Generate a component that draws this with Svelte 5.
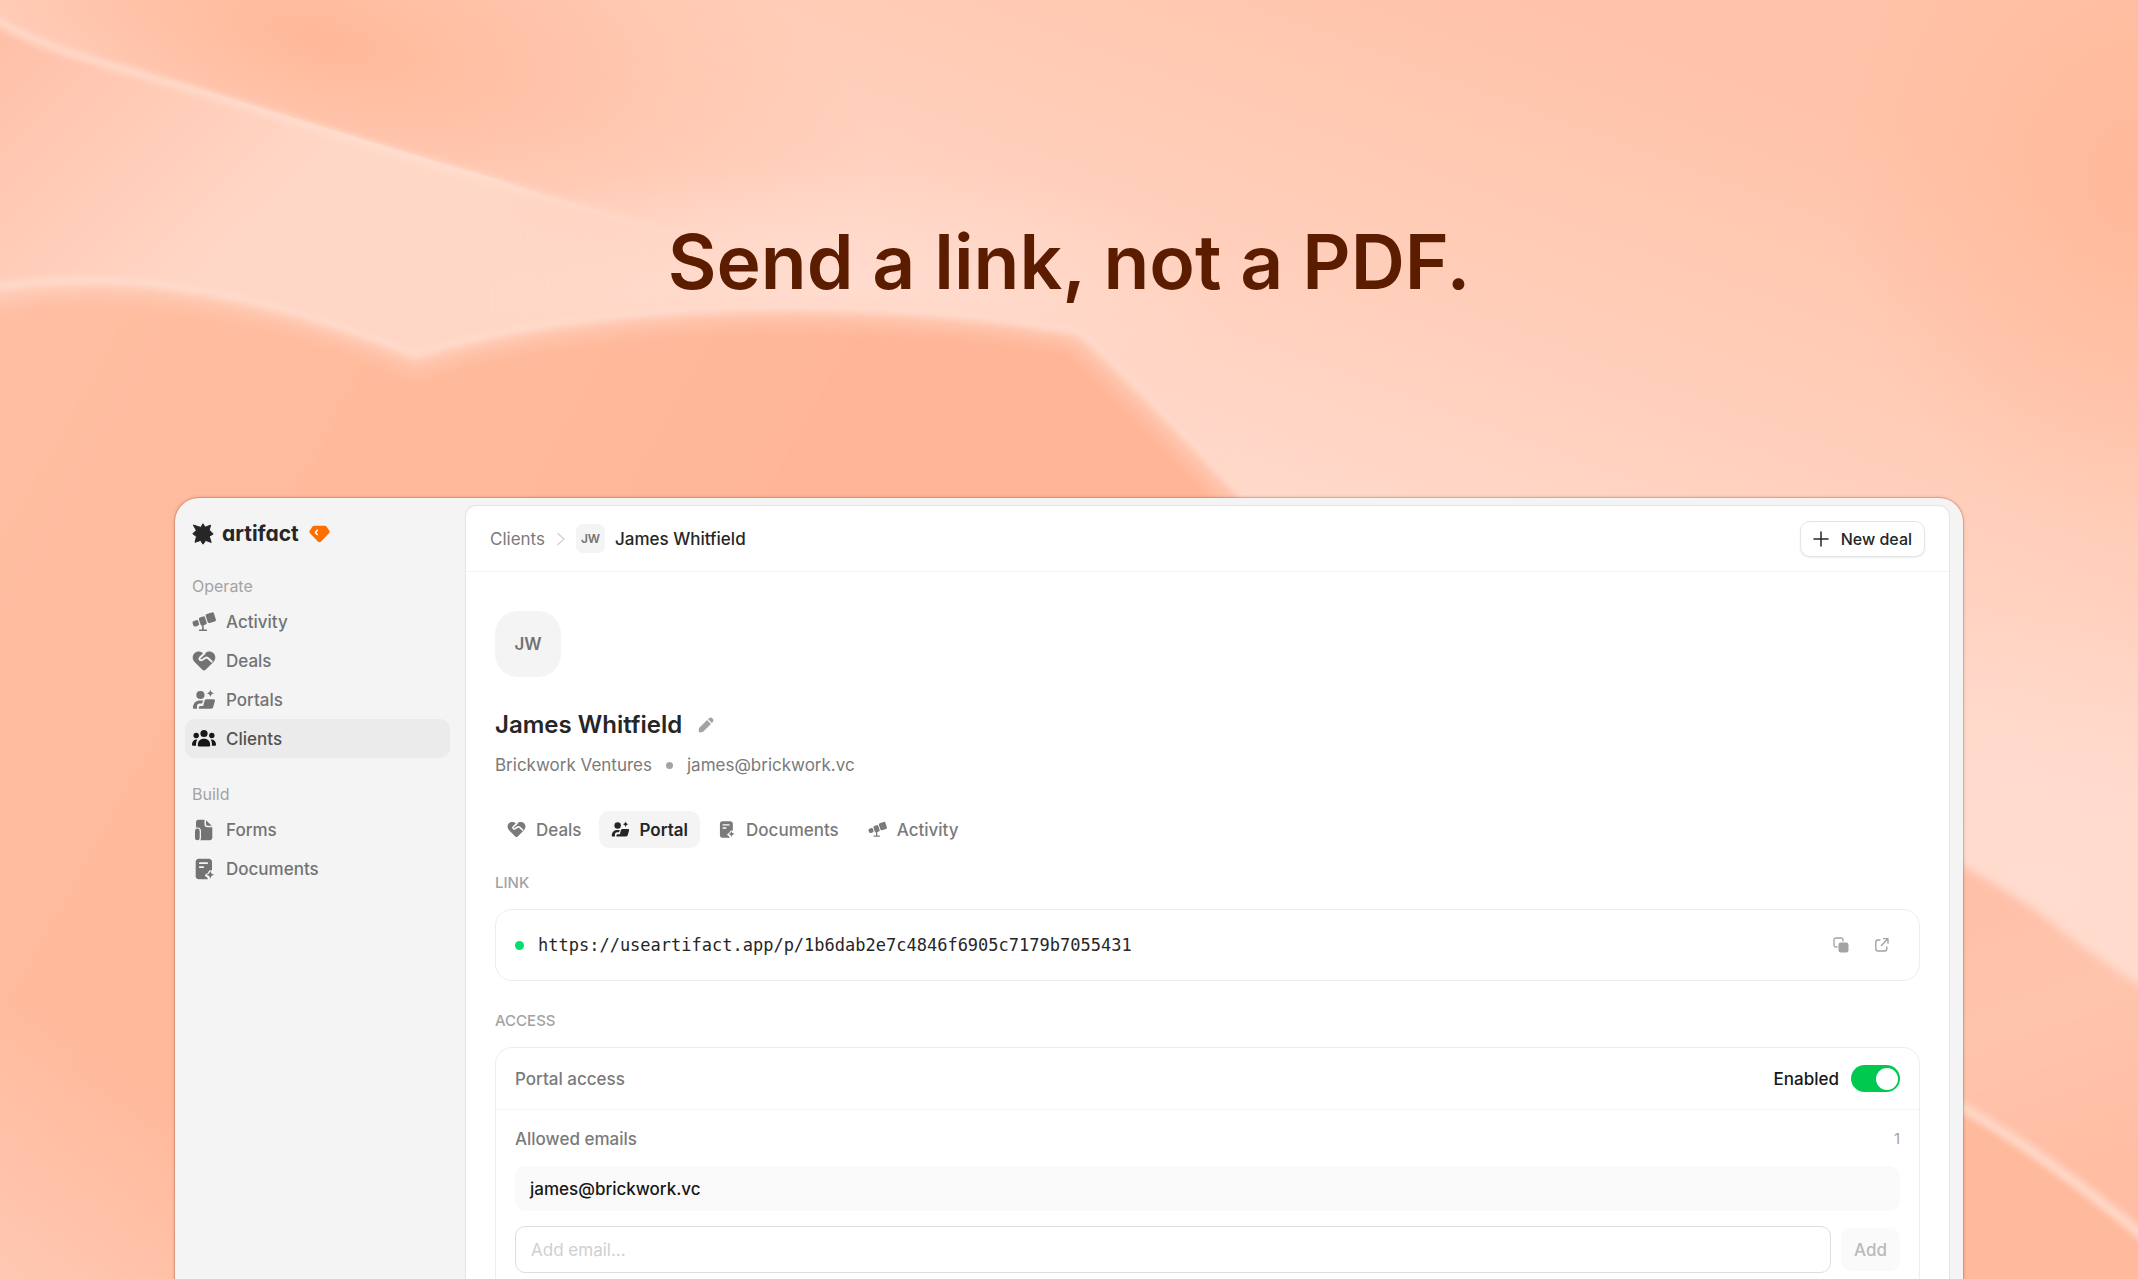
<script>
    const navGroups = [
        {
            title: "Operate",
            items: [
                { icon: "activity", label: "Activity" },
                { icon: "deals", label: "Deals" },
                { icon: "portal", label: "Portals" },
                { icon: "clients", label: "Clients", active: true },
            ],
        },
        {
            title: "Build",
            items: [
                { icon: "forms", label: "Forms" },
                { icon: "documents", label: "Documents" },
            ],
        },
    ];

    const tabs = [
        { icon: "deals", label: "Deals" },
        { icon: "portal", label: "Portal" },
        { icon: "documents", label: "Documents" },
        { icon: "activity", label: "Activity" },
    ];

    const client = {
        name: "James Whitfield",
        initials: "JW",
        company: "Brickwork Ventures",
        email: "james@brickwork.vc",
    };

    const portalUrl =
        "https://useartifact.app/p/1b6dab2e7c4846f6905c7179b7055431";

    let activeTab = $state("Portal");
    let enabled = $state(true);
    let emails = $state([client.email]);
    let newEmail = $state("");

    function addEmail(event) {
        event.preventDefault();
        if (!newEmail) return;
        emails.push(newEmail);
        newEmail = "";
    }

    function copyLink() {
        navigator.clipboard?.writeText(portalUrl);
    }
</script>

{#snippet icon(name)}
    <svg class="icon" viewBox="0 0 24 24" fill="currentColor" aria-hidden="true">
        {#if name === "activity"}
            <rect x="0.8" y="10.4" width="6" height="5.8" rx="1.8" transform="rotate(-18 3.8 13.3)" />
            <rect x="7.6" y="6.8" width="6.4" height="8.4" rx="1.5" transform="rotate(-18 10.8 11)" />
            <rect x="14.5" y="3" width="8.6" height="9.4" rx="1.8" transform="rotate(-18 18.8 7.7)" />
            <path d="M10.9 14v6M7.6 20.3h6.8" fill="none" stroke="currentColor" stroke-width="1.6" stroke-linecap="round" />
        {:else if name === "deals"}
            <path d="M12 21.4c-.6 0-1.1-.3-1.6-.7L2.6 12.900C.2 10.300.1 6.500 2.400 4.200 4.800 1.900 8.600 1.900 11 4.200l1 .9 1-.9c2.400-2.300 6.200-2.300 8.600 0 2.300 2.300 2.200 6.100-.2 8.700l-7.800 7.800c-.5.4-1 .7-1.600.7z" />
            <path class="cut" d="M12.6 4.2 7.8 8.8c-1.2 1.4.6 3.2 2.4 2.200l3.300-2.200c.8-.4 1.600-.2 2.300.3l3.900 3.500" />
        {:else if name === "portal"}
            <circle cx="8.4" cy="7" r="4.1" />
            <path d="M18.400 1.600c.4 2.300 1.400 3.300 3.600 3.700-2.200.4-3.200 1.400-3.600 3.700-.4-2.300-1.400-3.300-3.600-3.700 2.200-.4 3.200-1.400 3.600-3.700z" />
            <path d="M1.700 20.700c-.5 0-.8-.3-.8-.8.2-4.800 3.100-7.300 7.500-7.300h2.700l-1 3H7.600c-1.600 0-2.600 1.300-2.600 3v2.100z" />
            <path d="M14.400 11.300h7.100c1 0 1.700.9 1.400 1.800l-1.700 6c-.3 1-1.100 1.600-2.100 1.600H7.300c-.4 0-.6-.3-.6-.7 0-1.300.8-2.100 2-2.100h2.500l1.300-4.900c.3-1 1-1.700 1.900-1.700z" />
        {:else if name === "clients"}
            <circle cx="12" cy="6.5" r="3.6" />
            <circle cx="4.2" cy="8.5" r="2.7" />
            <circle cx="19.8" cy="8.5" r="2.7" />
            <path d="M12 11.800c3.900 0 6.200 2.500 6.200 6.200 0 1-.6 1.600-1.600 1.600H7.400c-1 0-1.600-.6-1.600-1.600 0-3.700 2.300-6.200 6.200-6.200z" />
            <path d="M5.400 12.500c-1.100 1.500-1.500 3.700-1.300 6.200H1.300c-.8 0-1.300-.5-1.300-1.300 0-3 1.900-5.200 5.400-4.900zM18.600 12.500c1.100 1.500 1.500 3.700 1.300 6.200h2.800c.8 0 1.300-.5 1.300-1.300 0-3-1.900-5.200-5.400-4.900z" />
        {:else if name === "forms"}
            <path d="M6.500 1.700h6v4.800c0 1.800 1 2.800 2.800 2.800h5v10.300c0 1.600-1 2.700-2.700 2.700H8.300c.5-.8.700-1.600.7-2.600v-6.800c0-2-1.200-3.300-3.200-3.300H4V4.300c0-1.600.9-2.600 2.500-2.600z" />
            <path d="M14 2.200l5.800 5.500h-4.200c-1 0-1.600-.6-1.600-1.600z" />
            <rect x="3" y="10.6" width="4.7" height="11.7" rx="2.3" />
        {:else if name === "documents"}
            <path fill-rule="evenodd" d="M6.800 1.700h10.100c1.800 0 3.100 1.300 3.100 3.100v8.700c-1.600-.8-3.200-.2-3.700 1.400-.3 1-.9 1.500-1.900 1.800-1.900.6-1.900 2.500-.2 3.300 1 .4 1.500.9 1.700 2.300H6.800c-1.800 0-3.100-1.300-3.100-3.100V4.800c0-1.800 1.300-3.100 3.100-3.100zm.9 3.600c-1.100 0-1.100 1.700 0 1.700h7.600c1.100 0 1.100-1.700 0-1.700zm0 4c-1.100 0-1.100 1.700 0 1.700h3.600c1.100 0 1.100-1.700 0-1.700z" />
            <path d="M18.300 13.700c.5 2.500 1.500 3.600 4 4.100-2.500.5-3.500 1.600-4 4.100-.5-2.500-1.500-3.600-4-4.100 2.500-.5 3.500-1.600 4-4.100z" />
        {/if}
    </svg>
{/snippet}

<div class="page">
    <svg class="backdrop" viewBox="0 0 2138 1279" preserveAspectRatio="none" aria-hidden="true">
        <defs>
            <linearGradient id="sky" gradientUnits="userSpaceOnUse" x1="1200" y1="480" x2="1400" y2="-60">
                <stop offset="0" stop-color="#ffd9cb" />
                <stop offset="0.5" stop-color="#ffcdb8" />
                <stop offset="1" stop-color="#ffc3a9" />
            </linearGradient>
            <linearGradient id="left-light" gradientUnits="userSpaceOnUse" x1="0" y1="40" x2="220" y2="260">
                <stop offset="0" stop-color="#ffc0a8" />
                <stop offset="1" stop-color="#ffd7c6" />
            </linearGradient>
            <linearGradient id="left-fade" gradientUnits="userSpaceOnUse" x1="480" y1="0" x2="760" y2="0">
                <stop offset="0" stop-color="#fff" />
                <stop offset="1" stop-color="#000" />
            </linearGradient>
            <linearGradient id="hill" gradientUnits="userSpaceOnUse" x1="0" y1="0" x2="900" y2="500">
                <stop offset="0" stop-color="#ffbfa5" />
                <stop offset="0.5" stop-color="#ffba9c" />
                <stop offset="1" stop-color="#ffb597" />
            </linearGradient>
            <linearGradient id="corner" gradientUnits="userSpaceOnUse" x1="140" y1="1080" x2="0" y2="1279">
                <stop offset="0" stop-color="#ffc8b2" stop-opacity="0" />
                <stop offset="1" stop-color="#ffc8b2" />
            </linearGradient>
            <linearGradient id="right-mid" gradientUnits="userSpaceOnUse" x1="2000" y1="900" x2="2100" y2="1180">
                <stop offset="0" stop-color="#ffc0a8" />
                <stop offset="0.4" stop-color="#ffc4ac" />
                <stop offset="1" stop-color="#ffbda3" />
            </linearGradient>
            <radialGradient id="warm">
                <stop offset="0" stop-color="#ffb594" />
                <stop offset="1" stop-color="#ffb594" stop-opacity="0" />
            </radialGradient>
            <radialGradient id="pale">
                <stop offset="0" stop-color="#ffdccf" />
                <stop offset="1" stop-color="#ffdccf" stop-opacity="0" />
            </radialGradient>
            <filter id="haze" x="-10%" y="-10%" width="120%" height="120%">
                <feGaussianBlur stdDeviation="9" />
            </filter>
            <filter id="soft" x="-10%" y="-10%" width="120%" height="120%">
                <feGaussianBlur stdDeviation="5" />
            </filter>
            <filter id="edge" x="-10%" y="-10%" width="120%" height="120%">
                <feGaussianBlur stdDeviation="3" />
            </filter>
            <mask id="fade-right">
                <rect width="2138" height="1279" fill="url(#left-fade)" />
            </mask>
        </defs>

        <rect width="2138" height="1279" fill="url(#sky)" />
        <ellipse cx="2138" cy="180" rx="300" ry="360" fill="url(#warm)" opacity="0.7" />
        <ellipse cx="320" cy="40" rx="560" ry="230" fill="url(#warm)" opacity="0.9" transform="rotate(14 320 40)" />
        <ellipse cx="2040" cy="890" rx="420" ry="280" fill="url(#pale)" />
        <ellipse cx="820" cy="290" rx="420" ry="130" fill="url(#pale)" />

        <g mask="url(#fade-right)">
            <path d="M0 22C18 36 60 50 198 88C300 120 400 151 500 180C560 200 610 214 900 300V600H0z" fill="url(#left-light)" />
            <path d="M-10 16C18 38 60 52 198 91C300 123 400 154 500 183C560 203 610 214 700 240" fill="none" stroke="#ffdfd2" stroke-width="8" opacity="0.75" filter="url(#edge)" />
        </g>

        <path d="M-20 296C30 285 100 283 150 288C260 300 340 328 416 358C500 331 640 310 790 310C900 311 1000 320 1078 334C1130 380 1178 430 1243 500V1400H-20z" fill="url(#hill)" filter="url(#soft)" />
        <path d="M-20 298C30 287 100 285 150 290C260 302 340 330 416 361C500 334 640 312 790 312C900 313 1000 322 1076 336C1126 382 1174 432 1239 502" fill="none" stroke="#ffd3c1" stroke-width="16" opacity="0.8" filter="url(#haze)" />
        <path d="M-20 290C30 280 100 278 150 283C260 296 340 324 416 354C500 327 640 306 790 306C900 307 1000 316 1080 331C1130 376 1178 428 1246 498" fill="none" stroke="#ffdbcd" stroke-width="7" filter="url(#edge)" />
        <rect y="900" width="300" height="379" fill="url(#corner)" />

        <path d="M1900 836C1960 862 2030 902 2070 938C2100 958 2120 976 2160 996V1400H1900z" fill="url(#right-mid)" filter="url(#soft)" />
        <path d="M1900 1068L1963 1102C2010 1128 2080 1176 2160 1244V1400H1900z" fill="#ffb99c" />
        <path d="M1900 1074L1963 1108C2010 1134 2080 1182 2160 1250" fill="none" stroke="#ffd7c7" stroke-width="11" filter="url(#edge)" />
    </svg>

    <header class="hero">
        <h1>Send a link, not a PDF.</h1>
    </header>

    <div class="window">
        <aside class="sidebar">
            <a class="brand" href="#home">
                <svg class="brand-mark" viewBox="0 0 22 22" fill="#262626" stroke="#262626" stroke-width="1" stroke-linejoin="round" aria-hidden="true">
                    <path d="M11 .8l2 3.400L18.600 2.200l-1.300 4.900 3.900 3.800-3.900 2.500 1.900 6-5.500-2L11 21.200l-2.500-3.800-5.500 1.900 1.500-5.700L.8 10.800l3.500-3.500L1.300 2l7.500 2.400z" />
                </svg>
                <span class="brand-name">artifact</span>
                <svg class="brand-gem" viewBox="0 0 21 18" aria-hidden="true">
                    <path d="M5.200.7h10.600c.7 0 1.300.3 1.700.9l2.700 3.900c.6.900.5 1.900-.2 2.700l-7.800 8.300c-1 1.100-2.400 1.100-3.400 0L1 8.200C.3 7.400.2 6.400.8 5.500l2.700-3.900c.4-.6 1-.9 1.700-.9z" fill="#ff6f00" />
                    <path d="M8.300 5.300L6.400 7.500l1.900 2" fill="none" stroke="#fff" stroke-width="1.6" stroke-linecap="round" stroke-linejoin="round" />
                </svg>
            </a>

            {#each navGroups as group}
                <nav class="nav-group" aria-label={group.title}>
                    <h2>{group.title}</h2>
                    {#each group.items as item}
                        <a class="nav-item" class:active={item.active} href="#{item.label.toLowerCase()}">
                            {@render icon(item.icon)}
                            <span>{item.label}</span>
                        </a>
                    {/each}
                </nav>
            {/each}
        </aside>

        <main class="panel">
            <div class="topbar">
                <div class="crumbs">
                    <a href="#clients">Clients</a>
                    <svg class="chevron" viewBox="0 0 8 14" fill="none" stroke="currentColor" stroke-width="1.5" stroke-linecap="round" stroke-linejoin="round" aria-hidden="true">
                        <path d="M1 1.500L7 7l-6 5.500" />
                    </svg>
                    <span class="avatar-small">{client.initials}</span>
                    <span class="current">{client.name}</span>
                </div>
                <button class="btn-new" type="button">
                    <svg viewBox="0 0 16 16" fill="none" stroke="currentColor" stroke-width="1.5" stroke-linecap="round" aria-hidden="true">
                        <path d="M8 1v14M1 8h14" />
                    </svg>
                    New deal
                </button>
            </div>

            <div class="content">
                <div class="avatar">{client.initials}</div>

                <div class="title-row">
                    <h3>{client.name}</h3>
                    <button class="icon-button" type="button" aria-label="Edit name">
                        <svg viewBox="0 0 16 16" fill="currentColor" aria-hidden="true">
                            <path d="M9 3l4 4-7.600 7.500c-.5.500-1.100.7-1.700.7H1.500c-.4 0-.7-.3-.7-.7v-2.200c0-.7.3-1.300.7-1.700z" />
                            <path d="M10 2.200l1-1c.9-.9 2.300-.9 3.200 0l.6.600c.9.900.9 2.300 0 3.200l-1 1z" />
                        </svg>
                    </button>
                </div>

                <div class="meta">
                    <span>{client.company}</span>
                    <span class="meta-dot"></span>
                    <span>{client.email}</span>
                </div>

                <div class="tabs" role="tablist">
                    {#each tabs as tab}
                        <button
                            class="tab"
                            class:active={activeTab === tab.label}
                            type="button"
                            role="tab"
                            aria-selected={activeTab === tab.label}
                            onclick={() => (activeTab = tab.label)}
                        >
                            {@render icon(tab.icon)}
                            {tab.label}
                        </button>
                    {/each}
                </div>

                <h4>LINK</h4>
                <div class="card link-card">
                    <span class="status"></span>
                    <span class="url">{portalUrl}</span>
                    <button class="icon-button" type="button" aria-label="Copy link" onclick={copyLink}>
                        <svg viewBox="0 0 16 16" aria-hidden="true">
                            <path d="M4.500 10H3C1.700 10 1 9.300 1 8V3c0-1.300.7-2 2-2h5c1.300 0 2 .7 2 2v1.500" fill="none" stroke="currentColor" stroke-width="1.3" />
                            <rect x="5.5" y="5.5" width="10" height="10" rx="2.2" fill="currentColor" />
                        </svg>
                    </button>
                    <a class="icon-button" href={portalUrl} aria-label="Open link">
                        <svg viewBox="0 0 16 16" fill="none" stroke="currentColor" stroke-width="1.4" stroke-linecap="round" stroke-linejoin="round" aria-hidden="true">
                            <path d="M6 3H4C2.600 3 1.800 3.800 1.800 5.200v6.600c0 1.400.8 2.200 2.200 2.200h6.600c1.400 0 2.200-.8 2.200-2.200V10M7.500 8.500l6.300-6.700M9.500 1.600H14v4.600" />
                        </svg>
                    </a>
                </div>

                <h4>ACCESS</h4>
                <div class="card">
                    <label class="access-row">
                        <span class="access-label">Portal access</span>
                        <span class="access-state">{enabled ? "Enabled" : "Disabled"}</span>
                        <input class="switch" type="checkbox" role="switch" bind:checked={enabled} />
                    </label>

                    <div class="emails">
                        <div class="emails-head">
                            <span class="access-label">Allowed emails</span>
                            <span class="count">{emails.length}</span>
                        </div>
                        {#each emails as email}
                            <div class="email-item">{email}</div>
                        {/each}
                        <form class="add-row" onsubmit={addEmail}>
                            <input type="email" placeholder="Add email..." aria-label="Add email" bind:value={newEmail} />
                            <button class="btn-add" type="submit" disabled={!newEmail}>Add</button>
                        </form>
                    </div>
                </div>
            </div>
        </main>
    </div>
</div>

<style>
    :global(body) {
        background: #ffbb9e;
    }

    .page {
        position: relative;
        display: flex;
        flex-direction: column;
        height: 100vh;
        overflow: hidden;
        font-family: Inter, "Liberation Sans", sans-serif;
        font-size: 17px;
        line-height: 24px;
        color: #262626;
        -webkit-font-smoothing: antialiased;
    }

    .page *,
    .page *::before {
        box-sizing: border-box;
    }

    a {
        color: inherit;
        text-decoration: none;
    }

    button,
    input {
        font: inherit;
        color: inherit;
    }

    button {
        cursor: pointer;
    }

    .backdrop {
        position: absolute;
        inset: 0;
        width: 100%;
        height: 100%;
    }

    .hero {
        position: relative;
        padding: 216px 24px 190px;
        text-align: center;
    }

    .hero h1 {
        margin: 0;
        font-size: 75px;
        line-height: 92px;
        font-weight: 600;
        color: #5c1c00;
    }

    .window {
        position: relative;
        display: flex;
        flex: 1 0 auto;
        margin: 0 175px;
        padding: 7px 13px 0 0;
        background: #f4f4f4;
        border-radius: 24px 24px 0 0;
        box-shadow:
            0 0 0 1px rgba(120, 40, 0, 0.16),
            0 0 3px 1px rgba(120, 40, 0, 0.18);
    }

    .sidebar {
        flex: none;
        width: 290px;
        padding: 13px 15px 0 10px;
    }

    .brand {
        display: flex;
        align-items: center;
        height: 31px;
        margin: 0 0 25px 7px;
    }

    .brand-mark {
        width: 22px;
        height: 22px;
    }

    .brand-name {
        margin: 0 10px 0 8px;
        font-size: 21px;
        font-weight: 700;
        font-feature-settings: "cv11";
    }

    .brand-gem {
        width: 21px;
        height: 18px;
    }

    .nav-group {
        margin-bottom: 24px;
    }

    .nav-group h2 {
        margin: 0 7px 4px;
        font-size: 16px;
        line-height: 24px;
        font-weight: 400;
        color: #a3a3a3;
    }

    .nav-item {
        --cut: #f4f4f4;
        display: flex;
        align-items: center;
        gap: 10px;
        height: 39px;
        padding: 0 7px;
        border-radius: 10px;
        font-weight: 500;
        color: #737373;
    }

    .nav-item.active {
        background: #ebebeb;
        color: #525252;
    }

    .icon {
        flex: none;
        width: 24px;
        height: 24px;
    }

    .nav-item.active .icon {
        color: #171717;
    }

    .cut {
        fill: none;
        stroke: var(--cut);
        stroke-width: 2;
        stroke-linecap: round;
        stroke-linejoin: round;
    }

    .panel {
        flex: 1;
        min-width: 0;
        background: #fff;
        border: 1px solid #e5e5e5;
        border-bottom: 0;
        border-radius: 11px 11px 0 0;
    }

    .topbar {
        display: flex;
        align-items: center;
        justify-content: space-between;
        height: 66px;
        padding: 0 24px;
        border-bottom: 1px solid #f5f5f5;
    }

    .crumbs {
        display: flex;
        align-items: center;
        color: #7a7a7a;
    }

    .chevron {
        width: 8px;
        height: 14px;
        margin: 0 11px 0 12px;
        color: #d4d4d4;
    }

    .avatar-small {
        display: grid;
        place-items: center;
        width: 29px;
        height: 29px;
        margin-right: 10px;
        border-radius: 7px;
        background: #f4f4f4;
        font-size: 12px;
        font-weight: 600;
        color: #737373;
    }

    .current {
        font-weight: 500;
        color: #262626;
    }

    .btn-new {
        display: flex;
        align-items: center;
        gap: 12px;
        height: 36px;
        padding: 0 12px;
        border: 1px solid #e5e5e5;
        border-radius: 10px;
        background: #fff;
        box-shadow: 0 1px 2px rgba(0, 0, 0, 0.08);
        font-size: 16px;
        font-weight: 500;
    }

    .btn-new svg {
        width: 16px;
        height: 16px;
    }

    .content {
        padding: 39px 29px 24px;
    }

    .avatar {
        display: grid;
        place-items: center;
        width: 66px;
        height: 66px;
        border-radius: 23px;
        background: #f4f4f4;
        font-weight: 600;
        color: #737373;
    }

    .title-row {
        display: flex;
        align-items: center;
        gap: 16px;
        margin-top: 32px;
    }

    .title-row h3 {
        margin: 0;
        font-size: 24px;
        line-height: 32px;
        font-weight: 600;
    }

    .icon-button {
        display: block;
        padding: 0;
        border: 0;
        background: none;
        color: #a3a3a3;
    }

    .icon-button svg {
        display: block;
        width: 16px;
        height: 16px;
    }

    .meta {
        display: flex;
        align-items: center;
        gap: 14px;
        margin-top: 12px;
        color: #7a7a7a;
    }

    .meta-dot {
        width: 7px;
        height: 7px;
        border-radius: 50%;
        background: #a3a3a3;
    }

    .tabs {
        display: flex;
        gap: 5px;
        margin-top: 34px;
    }

    .tab {
        --cut: #fff;
        display: flex;
        align-items: center;
        gap: 10px;
        height: 37px;
        padding: 0 12px;
        border: 0;
        border-radius: 10px;
        background: none;
        font-weight: 500;
        color: #7a7a7a;
    }

    .tab .icon {
        width: 19px;
        height: 19px;
    }

    .tab.active {
        --cut: #f4f4f4;
        background: #f4f4f4;
        font-weight: 600;
        color: #262626;
    }

    h4 {
        margin: 25px 0 16px;
        font-size: 15px;
        line-height: 20px;
        font-weight: 500;
        color: #a3a3a3;
    }

    .card {
        border: 1px solid #ededed;
        border-radius: 17px;
    }

    .link-card {
        display: flex;
        align-items: center;
        height: 72px;
        margin-bottom: 30px;
        padding: 0 29px 0 19px;
    }

    .status {
        width: 9px;
        height: 9px;
        margin-right: 14px;
        border-radius: 50%;
        background: #05df72;
    }

    .url {
        flex: 1;
        font-family: "DejaVu Sans Mono", "Liberation Mono", monospace;
        font-size: 17px;
    }

    .link-card .icon-button {
        margin-left: 25px;
    }

    .access-row {
        display: flex;
        align-items: center;
        height: 62px;
        padding: 0 19px;
        border-bottom: 1px solid #f5f5f5;
    }

    .access-label {
        flex: 1;
        font-weight: 500;
        color: #7a7a7a;
    }

    .access-state {
        font-weight: 500;
        color: #171717;
    }

    .switch {
        appearance: none;
        display: flex;
        align-items: center;
        width: 49px;
        height: 27px;
        margin: 0 0 0 12px;
        padding: 0 2px;
        border-radius: 14px;
        background: #d4d4d4;
        cursor: pointer;
    }

    .switch::before {
        content: "";
        width: 22px;
        height: 22px;
        border-radius: 50%;
        background: #fff;
    }

    .switch:checked {
        justify-content: flex-end;
        background: #00c950;
    }

    .emails {
        display: flex;
        flex-direction: column;
        gap: 15px;
        padding: 17px 19px 19px;
    }

    .emails-head {
        display: flex;
        align-items: center;
    }

    .count {
        font-size: 15px;
        color: #a3a3a3;
    }

    .email-item {
        display: flex;
        align-items: center;
        height: 45px;
        padding: 0 15px;
        border-radius: 10px;
        background: #fafafa;
        font-weight: 500;
        color: #171717;
    }

    .add-row {
        display: flex;
        align-items: center;
        gap: 10px;
    }

    .add-row input {
        flex: 1;
        min-width: 0;
        height: 47px;
        padding: 0 15px;
        border: 1px solid #dedede;
        border-radius: 10px;
        background: #fff;
        outline: none;
    }

    .add-row input::placeholder {
        color: #d0d0d0;
        opacity: 1;
    }

    .btn-add {
        height: 43px;
        padding: 0 13px;
        border: 0;
        border-radius: 10px;
        background: #f4f4f4;
        font-weight: 500;
        color: #737373;
    }

    .btn-add:disabled {
        background: #fafafa;
        color: #b9b9b9;
        cursor: default;
    }
</style>
